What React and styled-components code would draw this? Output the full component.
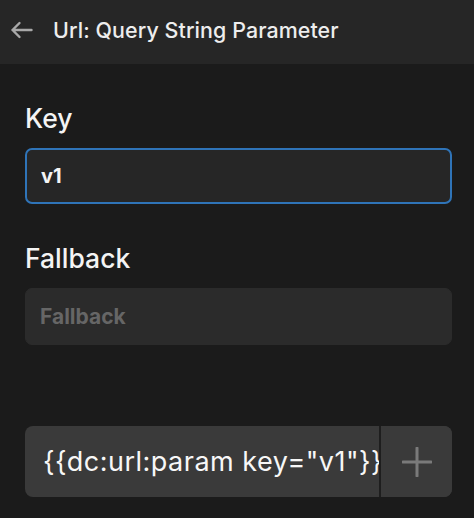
import React from 'react';
import styled, { createGlobalStyle } from 'styled-components';

const GlobalStyle = createGlobalStyle`
  html, body {
    margin: 0;
    padding: 0;
    background: #1b1b1b;
  }
  body {
    font-family: Inter, "Noto Sans", "Liberation Sans", sans-serif;
    -webkit-font-smoothing: antialiased;
  }
`;

const Page = styled.div`
  width: 474px;
  min-height: 518px;
  background: #1b1b1b;
  color: #f2f2f2;
`;

const Header = styled.header`
  height: 64px;
  background: #262626;
  display: flex;
  align-items: center;
  padding: 0 0 4px 10px;
  box-sizing: border-box;
  gap: 20px;
`;

const BackButton = styled.button`
  background: none;
  border: 0;
  padding: 0;
  display: flex;
  align-items: center;
  color: #a8a8a8;
  cursor: pointer;
`;

const Title = styled.h1`
  margin: 0;
  font-size: 21.4px;
  font-weight: 500;
  color: #ededed;
  letter-spacing: 0.1px;
`;

const Body = styled.main`
  padding: 38px 22px 0 25px;
  display: flex;
  flex-direction: column;
`;

const Field = styled.div`
  display: flex;
  flex-direction: column;
  gap: 14px;
  margin-bottom: ${p => p.$spacing || 0}px;
`;

const Label = styled.label`
  font-size: 26.5px;
  font-weight: 500;
  color: #f4f4f4;
  line-height: 32px;
`;

const Input = styled.input`
  box-sizing: border-box;
  height: ${p => (p.$focused ? 56 : 57)}px;
  width: 100%;
  border-radius: 7px;
  border: ${p => (p.$focused ? '2px solid #2f74b8' : '1px solid #2b2b2b')};
  background: ${p => (p.$focused ? '#262626' : '#2b2b2b')};
  color: #f4f4f4;
  font-family: inherit;
  font-size: ${p => (p.$focused ? 20 : 21)}px;
  font-weight: 700;
  padding: 0 14px;
  outline: none;

  &::placeholder {
    color: #666666;
  }
`;

const TagRow = styled.div`
  display: flex;
  height: 71px;
  border-radius: 8px;
  overflow: hidden;
  background: #3a3a3a;
`;

const TagText = styled.div`
  flex: 1;
  min-width: 0;
  display: flex;
  align-items: center;
  padding-left: 18px;
  font-size: 27px;
  letter-spacing: 0.5px;
  color: #f7f7f7;
  white-space: nowrap;
  overflow: hidden;
  border-right: 2px solid #1e1e1e;
`;

const AddButton = styled.button`
  width: 71px;
  flex: none;
  border: 0;
  background: #3a3a3a;
  display: flex;
  align-items: center;
  justify-content: center;
  color: #7a7a7a;
  cursor: pointer;
  padding: 0;
`;

const ArrowIcon = () => (
  <svg width="23" height="18" viewBox="0 0 23 18" fill="none">
    <path d="M21.5 9H2.5M9.5 2L2.5 9l7 7" stroke="currentColor" strokeWidth="2.4" strokeLinecap="round" strokeLinejoin="round" />
  </svg>
);

const PlusIcon = () => (
  <svg width="30" height="30" viewBox="0 0 30 30" fill="none">
    <path d="M15 1v28M1 15h28" stroke="currentColor" strokeWidth="3" strokeLinecap="round" />
  </svg>
);

const App = () => {
  return (
    <Page>
      <GlobalStyle />
      <Header>
        <BackButton aria-label="Back">
          <ArrowIcon />
        </BackButton>
        <Title>Url: Query String Parameter</Title>
      </Header>
      <Body>
        <Field $spacing={38}>
          <Label>Key</Label>
          <Input $focused defaultValue="v1" />
        </Field>
        <Field $spacing={81}>
          <Label>Fallback</Label>
          <Input placeholder="Fallback" />
        </Field>
        <TagRow>
          <TagText>{'{{dc:url:param key="v1"}}'}</TagText>
          <AddButton aria-label="Add">
            <PlusIcon />
          </AddButton>
        </TagRow>
      </Body>
    </Page>
  );
};

export default App;
